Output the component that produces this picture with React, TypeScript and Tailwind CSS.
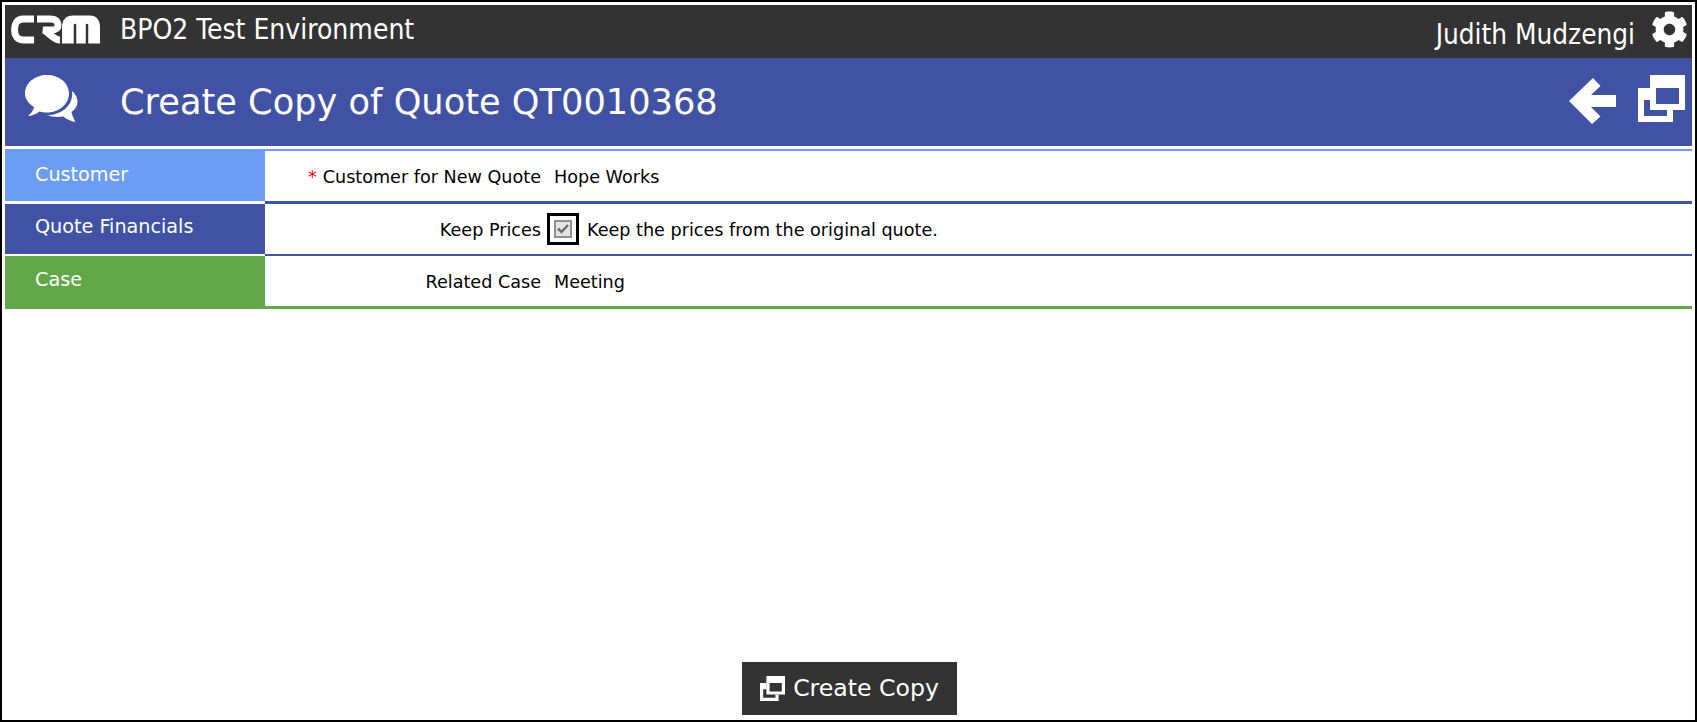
import { FaCog } from "react-icons/fa";

const verdana = "font-['DejaVu_Sans',Verdana,sans-serif]";
const tahoma = "font-['DejaVu_Sans_Condensed','DejaVu_Sans',sans-serif]";

function CrmLogo() {
    return (
        <svg width="92" height="32" viewBox="0 0 92 32" fill="none" stroke="#fff" strokeWidth="7">
            <path d="M24 4H13C7 4 4.500 9 4.500 14.500S7 25 13 25H24" />
            <path d="M27 4H41C46 4 48 6.500 48 10S46 15 41 15H33C38 16 43 25 50 25" />
            <path stroke="none" fill="#fff" d="M52 28.500V12C52 5 56 .5 63 .5H80C86 .5 90 5 90 12V28.500Z" />
            <path stroke="#333333" strokeWidth="2.500" strokeLinecap="round" d="M65 30V10M77 30V10" />
        </svg>
    );
}

function CommentsIcon() {
    return (
        <svg width="53" height="47" viewBox="0 0 53 47" fill="#fff">
            <path d="M22 0C34 0 44 8 44 18.500C44 29 34 37.500 22 37.500C19 37.500 17 37.200 14.500 36.500C11 39.500 6 40.800 3 41C6 38.500 8.500 35.500 9 32C3.500 28.500 0 24 0 18.500C0 8 10 0 22 0Z" />
            <path d="M47 16C50.500 19 52.500 22.500 52.500 26.500C52.500 31 50 34.500 46.500 37C47 40.500 49 44 50.500 47C46 46 41.500 44.500 38.500 41.500C31 42.500 27 42 22 40C33 40.500 49 33 47 16Z" />
        </svg>
    );
}

function BackArrow() {
    return (
        <svg width="47" height="46" viewBox="0 0 47 46" fill="#fff">
            <path d="M0 23L24 0L31.500 8L22 17H47V29H22L31.500 38.500L23 46Z" />
        </svg>
    );
}

function CopyIcon({ size, hole }: { size: number; hole: string }) {
    return (
        <svg width={size} height={size} viewBox="0 0 47 47" className="shrink-0">
            <path fill="#fff" fillRule="evenodd" d="M0 13H35V47H0ZM6 25V41H29V25Z" />
            <rect x="12" y="0" width="35" height="35" fill={hole} />
            <path fill="#fff" fillRule="evenodd" d="M12 0H47V35H12ZM18 13V29H41V13Z" />
        </svg>
    );
}

function App() {
    return (
        <div className={`h-[722px] flex flex-col border-2 border-black bg-white p-[3px] text-black ${verdana}`}>
            <header className="h-[53px] shrink-0 flex items-center bg-[#333333] text-white">
                <div className="ml-[5px] -mt-[2px]">
                    <CrmLogo />
                </div>
                <span className={`ml-[18px] mb-[3px] text-[28px] ${tahoma}`}>BPO2 Test Environment</span>
                <span className={`ml-auto mt-[7px] text-[27.7px] ${tahoma}`}>Judith Mudzengi</span>
                <FaCog className="ml-[16px] mr-[4px] mb-[5px] text-[37px]" />
            </header>

            <div className="h-[88px] shrink-0 flex items-center bg-[#4152a4] text-white">
                <div className="ml-[20px] w-[95px] mb-[7px]">
                    <CommentsIcon />
                </div>
                <h1 className="text-[35.2px]">Create Copy of Quote QT0010368</h1>
                <div className="ml-auto mb-[2px]">
                    <BackArrow />
                </div>
                <div className="ml-[22px] mr-[7px] mb-[7px]">
                    <CopyIcon size={47} hole="#4152a4" />
                </div>
            </div>

            <div className="mt-[3px] flex flex-col text-[17.6px]">
                <div className="h-[55px] flex">
                    <div className="w-[260px] h-[52px] pl-[30px] pt-[12px] bg-[#6c9cf4] text-white text-[19.2px]">Customer</div>
                    <div className="flex-1 flex items-center pt-[2px] border-t-2 border-b-[3px] border-t-[#6c9cf4] border-b-[#4152a4]">
                        <label className="w-[276px] text-right">
                            <span className="text-red-600 mr-[6px]">*</span>Customer for New Quote
                        </label>
                        <span className="ml-[13px]">Hope Works</span>
                    </div>
                </div>
                <div className="h-[52px] flex">
                    <div className="w-[260px] h-[50px] pl-[30px] pt-[9px] bg-[#4152a4] text-white text-[19.2px]">Quote Financials</div>
                    <div className="flex-1 flex items-center border-b-2 border-[#4152a4]">
                        <label className="w-[276px] text-right pt-[2px]">Keep Prices</label>
                        <span className="ml-[6px] size-[32px] flex items-center justify-center border-[3px] border-black">
                            <span className="size-[18px] flex items-center justify-center border-2 border-[#8f8f8f] bg-[#e4e4e4]">
                                <svg width="12" height="10" viewBox="0 0 12 10" fill="none" stroke="#6f6f6f" strokeWidth="2.500">
                                    <path d="M1 4.500L4.500 8L11 1" />
                                </svg>
                            </span>
                        </span>
                        <span className="ml-[8px] pt-[2px]">Keep the prices from the original quote.</span>
                    </div>
                </div>
                <div className="h-[53px] flex">
                    <div className="w-[260px] pl-[30px] pt-[10px] bg-[#62a84a] text-white text-[19.2px]">Case</div>
                    <div className="flex-1 flex items-center pt-[2px] border-b-[3px] border-[#62a84a]">
                        <label className="w-[276px] text-right">Related Case</label>
                        <span className="ml-[13px]">Meeting</span>
                    </div>
                </div>
            </div>

            <div className="mt-auto flex justify-center pb-[2px]">
                <button className="ml-[2px] h-[53px] w-[215px] flex items-center justify-center gap-[8px] bg-[#333333] text-white text-[23.6px]">
                    <CopyIcon size={25} hole="#333333" />
                    Create Copy
                </button>
            </div>
        </div>
    );
}

export default App;
